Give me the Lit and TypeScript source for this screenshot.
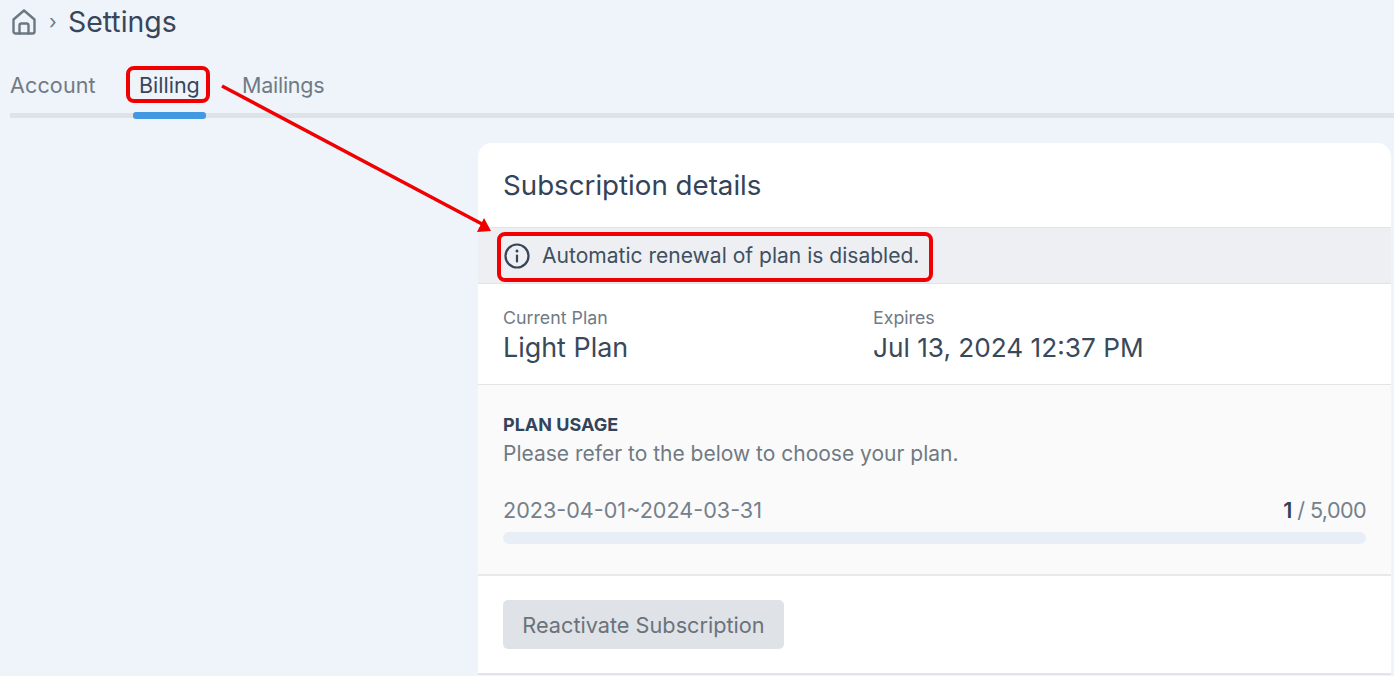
import { LitElement, html, css } from "lit";
import { customElement } from "lit/decorators.js";

@customElement("app-root")
export class AppRoot extends LitElement {
  static styles = css`
    :host { display: block; position: relative; width: 1394px; height: 676px; overflow: hidden; background: #eff3fa; font-family: Inter, "Liberation Sans", sans-serif; color: #2f3f52; }
    .crumbs { display: flex; align-items: center; height: 43px; padding-left: 10px; }
    .home { width: 28px; height: 28px; display: block; }
    .sep { margin-left: 11px; width: 19px; font-size: 20px; color: #6f7a84; line-height: 1; }
    .title { font-size: 28.4px; color: #37465a; }
    .tabs { display: flex; margin: 20px 0 0 10px; height: 50px; position: relative; }
    .tab { font-size: 21.5px; color: #6f7b84; line-height: 44px; }
    .tab.one { width: 129px; letter-spacing: 0.15px; }
    .tab.two { width: 104px; color: #37465a; }
    .tab.three { letter-spacing: -0.25px; margin-left: -1px; }
    .rail { height: 5px; background: #dee3e8; margin: 0 0 0 10px; position: relative; }
    .blue { position: absolute; left: 123px; top: -1px; width: 73px; height: 7px; border-radius: 3px; background: #4299e1; }
    .card { margin: 25px 0 0 478px; width: 913px; height: 532px; box-sizing: border-box; background: #fff; border-radius: 14px 14px 0 0; border-bottom: 2px solid #e1e4e8; display: flex; flex-direction: column; overflow: hidden; }
    .head { height: 84px; flex: none; display: flex; align-items: center; padding-left: 25px; font-size: 27.7px; color: #33435a; border-bottom: 1px solid #e2e4e7; }
    .alert { height: 55px; flex: none; display: flex; align-items: center; gap: 11px; padding-left: 25px; background: #edeff2; border-bottom: 1px solid #e2e4e7; font-size: 21.05px; color: #414f60; }
    .alert svg { width: 28px; height: 28px; flex: none; }
    .plan { height: 101px; flex: none; box-sizing: border-box; display: flex; padding: 22px 0 0 25px; border-bottom: 1px solid #e2e4e7; }
    .col { width: 370px; }
    .lbl { font-size: 17.8px; color: #6f7a84; line-height: 24px; }
    .val { font-size: 26.2px; color: #3a4959; line-height: 35px; }
    .val.light { font-size: 26.9px; }
    .usage { height: 191px; flex: none; box-sizing: border-box; background: #fafafa; padding: 28px 25px 0; border-bottom: 2px solid #e8e9eb; }
    .u-title { font-size: 18px; font-weight: 700; color: #33435a; line-height: 24px; }
    .u-sub { font-size: 21px; color: #6f7a84; line-height: 34px; }
    .range { display: flex; justify-content: space-between; margin-top: 25px; font-size: 21.6px; color: #75808a; line-height: 28px; }
    .range b { color: #33435a; font-weight: 600; }
    .count { letter-spacing: -0.6px; }
    .bar { height: 12px; margin-top: 8px; border-radius: 6px; background: #e8eef5; }
    .foot { flex: 1; padding: 24px 25px 0; }
    .btn { display: inline-flex; align-items: center; box-sizing: border-box; height: 49px; width: 281px; justify-content: center; background: #dfe2e6; border-radius: 5px; font-size: 21.7px; color: #6a727c; }
    .mark { position: absolute; box-sizing: border-box; border: 4px solid #f00000; border-radius: 8px; }
    .m1 { left: 126px; top: 66px; width: 84px; height: 37px; }
    .m2 { left: 497px; top: 232px; width: 436px; height: 50px; }
    .arrow { position: absolute; left: 0; top: 0; width: 1394px; height: 676px; pointer-events: none; }
  `;
  render() {
    return html`
      <div class="crumbs">
        <svg class="home" viewBox="0 0 28 28" fill="none" stroke="#6c7880" stroke-width="2.4" stroke-linejoin="round" stroke-linecap="round">
          <path d="M3.5 11.5 14 2.5l10.5 9v12a2 2 0 0 1-2 2h-17a2 2 0 0 1-2-2z"/>
          <path d="M9.5 25.5v-8a2 2 0 0 1 2-2h5a2 2 0 0 1 2 2v8"/>
        </svg>
        <span class="sep">›</span>
        <span class="title">Settings</span>
      </div>
      <div class="tabs">
        <span class="tab one">Account</span>
        <span class="tab two">Billing</span>
        <span class="tab three">Mailings</span>
      </div>
      <div class="rail"><div class="blue"></div></div>
      <div class="card">
        <div class="head">Subscription details</div>
        <div class="alert">
          <svg viewBox="0 0 28 28" fill="none" stroke="#36465a" stroke-width="2.2" stroke-linecap="round">
            <circle cx="14" cy="14" r="11.5"/>
            <path d="M14 13.5v6"/>
            <path d="M14 9v.2" stroke-width="2.8"/>
          </svg>
          <span>Automatic renewal of plan is disabled.</span>
        </div>
        <div class="plan">
          <div class="col"><div class="lbl">Current Plan</div><div class="val light">Light Plan</div></div>
          <div class="col"><div class="lbl">Expires</div><div class="val">Jul 13, 2024 12:37 PM</div></div>
        </div>
        <div class="usage">
          <div class="u-title">PLAN USAGE</div>
          <div class="u-sub">Please refer to the below to choose your plan.</div>
          <div class="range"><span>2023-04-01~2024-03-31</span><span class="count"><b>1</b> / 5,000</span></div>
          <div class="bar"></div>
        </div>
        <div class="foot"><div class="btn">Reactivate Subscription</div></div>
      </div>
      <div class="mark m1"></div>
      <div class="mark m2"></div>
      <svg class="arrow" viewBox="0 0 1394 676">
        <path d="M222 86 482 224" stroke="#f00000" stroke-width="3.5" fill="none"/>
        <path d="M491 231 477 232 484 218z" fill="#f00000"/>
      </svg>
    `;
  }
}
